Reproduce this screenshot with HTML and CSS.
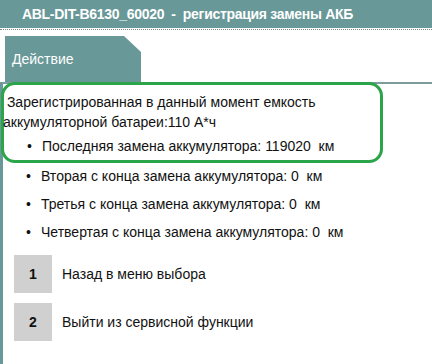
FILE: index.html
```html
<!DOCTYPE html><html lang="ru"><head>
    <meta charset="UTF-8">
    <meta name="viewport" content="width=device-width, initial-scale=1.0">
    <title>Регистрация замены АКБ</title>
    <link rel="stylesheet" href="styles.css">
</head>
<body>

<div class="header">ABL-DIT-B6130_60020&nbsp; -&nbsp; регистрация замены АКБ</div>
<div class="header-rule"></div>

<div class="tab">Действие</div>

<div class="panel">
    <div class="highlight">
        <div class="capacity">&nbsp;Зарегистрированная в данный момент емкость аккумуляторной батареи:110 А*ч</div>
        <ul class="changes">
            <li>Последняя замена аккумулятора: 119020&nbsp; км</li>
        </ul>
    </div>

    <ul class="changes">
        <li>Вторая с конца замена аккумулятора: 0&nbsp; км</li>
        <li>Третья с конца замена аккумулятора: 0&nbsp; км</li>
        <li>Четвертая с конца замена аккумулятора: 0&nbsp; км</li>
    </ul>

    <div class="option">
        <div class="key">1</div>
        <div>Назад в меню выбора</div>
    </div>
    <div class="option">
        <div class="key">2</div>
        <div>Выйти из сервисной функции</div>
    </div>
</div>

</body></html>
```

FILE: styles.css
```css
body {
    font-family: "Liberation Sans", Arial, sans-serif;
    font-size: 14px;
    color: #111;
    background-color: #fff;
    margin: 0;
    height: 364px;
    overflow: hidden;
}

.header {
    height: 28px;
    line-height: 28px;
    padding-left: 22px;
    background-color: #689898;
    color: #fff;
    font-size: 14px;
    font-weight: bold;
    letter-spacing: -0.3px;
}

.header-rule {
    margin-top: 1px;
    border-top: 1px dotted #7a8c8c;
}

.tab {
    margin: 6px 0 0 5px;
    width: 129px;
    height: 46px;
    padding-left: 7px;
    line-height: 47px;
    background-color: #689898;
    color: #fff;
    clip-path: polygon(0 0, 119px 0, 136px 16px, 136px 100%, 0 100%);
}

.panel {
    border-left: 3px solid #689898;
    border-top: 2px solid #7d9c9c;
    height: 280px;
}

/* green frame drawn round the current values */
.highlight {
    width: 376px;
    margin: -2px 0 0 -2px;
    padding-top: 7px;
    border: 3px solid #2ca44a;
    border-radius: 14px;
}

.capacity {
    line-height: 20px;
    margin-left: -1px;
}

.changes {
    margin: 0;
    padding-left: 23px;
    list-style: none;
}

.changes li {
    line-height: 28px;
}

.changes li::before {
    content: "•";
    display: inline-block;
    width: 15px;
}

.panel > .changes {
    margin: -1px 0 9px 0;
}

.option {
    display: flex;
    align-items: center;
    gap: 10px;
    margin: 0 0 10px 11px;
}

.key {
    width: 38px;
    height: 38px;
    line-height: 38px;
    text-align: center;
    background-color: #d0d0d0;
    font-weight: bold;
}
```
